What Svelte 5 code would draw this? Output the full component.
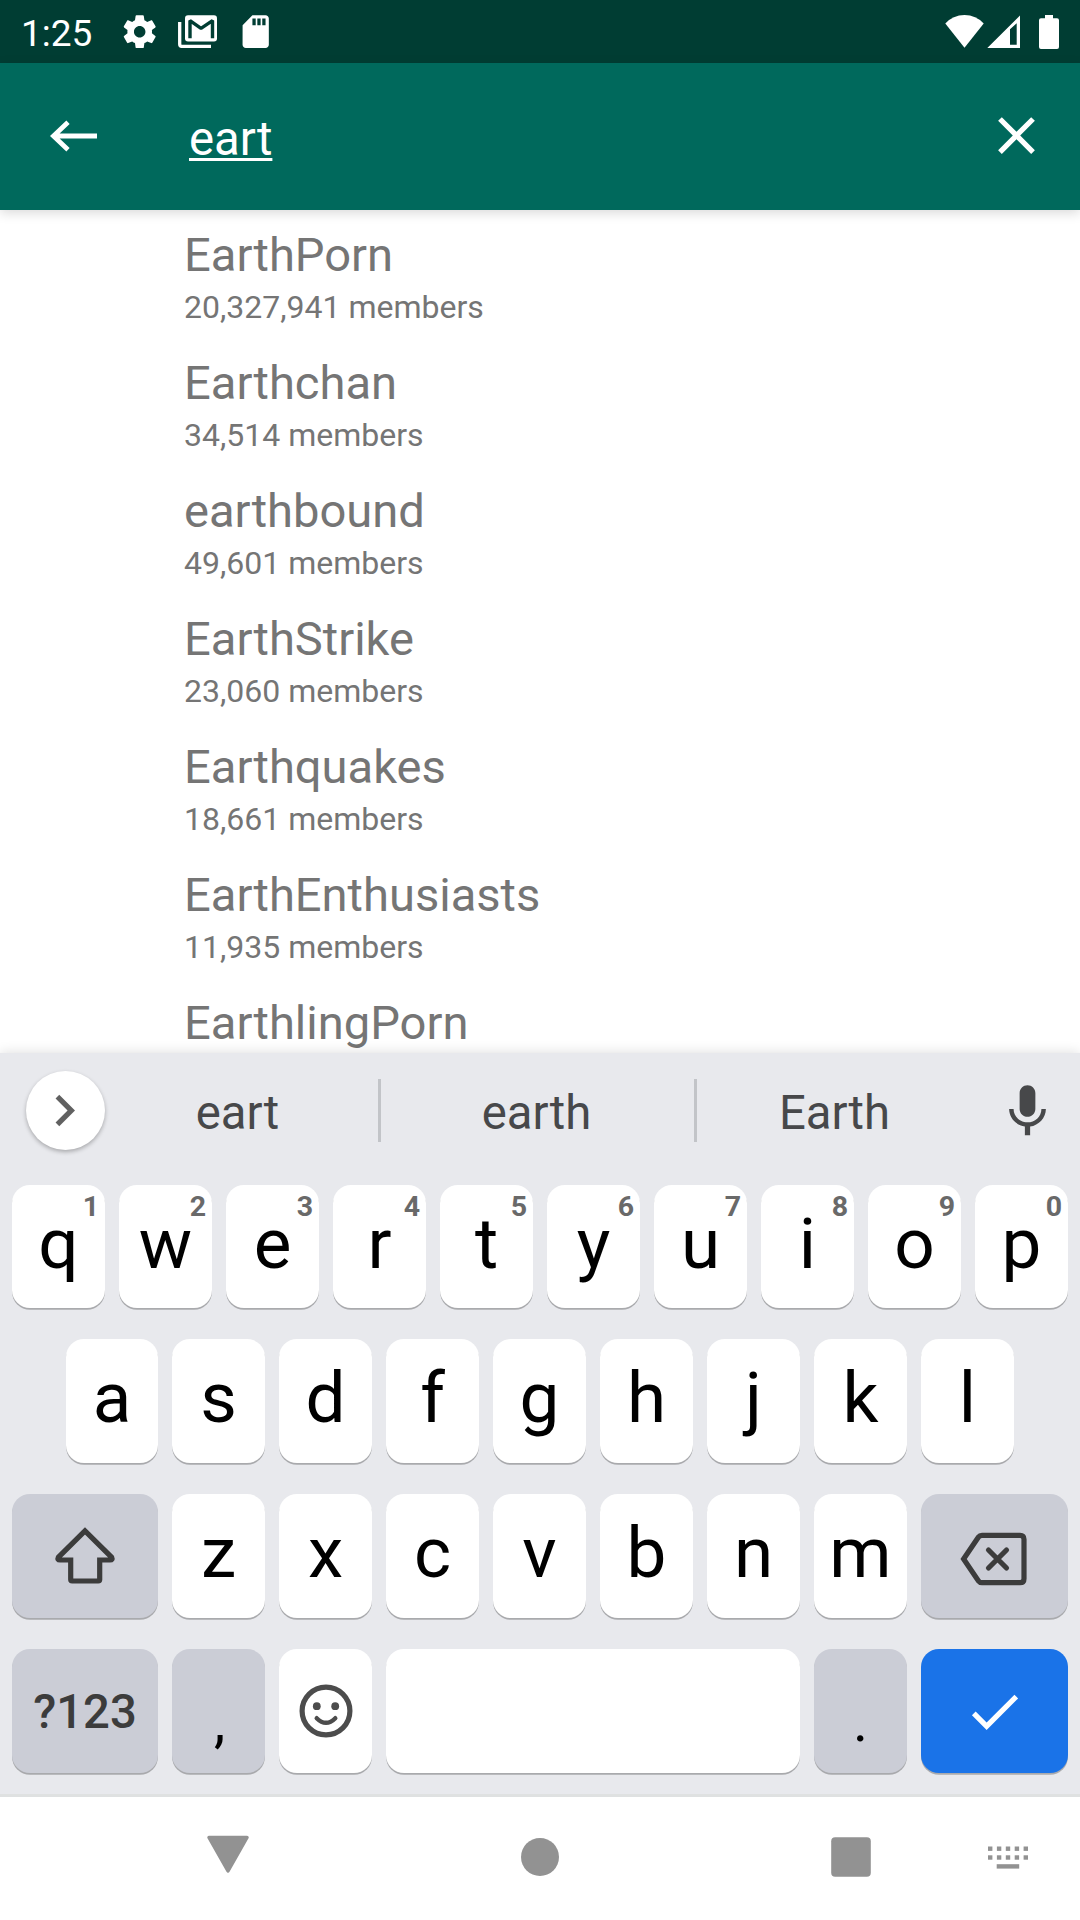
<script>
  const results = [
    ['EarthPorn', '20,327,941'],
    ['Earthchan', '34,514'],
    ['earthbound', '49,601'],
    ['EarthStrike', '23,060'],
    ['Earthquakes', '18,661'],
    ['EarthEnthusiasts', '11,935'],
    ['EarthlingPorn', ''],
  ];
  const top = [...'qwertyuiop'];
  const home = [...'asdfghjkl'];
  const bottom = [...'zxcvbnm'];
</script>

<div class="screen">
  <header class="status">
    <span class="time">1:25</span>
    <svg class="gear" viewBox="0 0 24 24" width="39.4" height="39.4"><path fill="#fff" d="M19.43 12.98c.04-.32.07-.64.07-.98s-.03-.66-.07-.98l2.11-1.65c.19-.15.24-.42.12-.64l-2-3.46c-.12-.22-.39-.3-.61-.22l-2.49 1c-.52-.4-1.08-.73-1.69-.98l-.38-2.65C14.46 2.18 14.25 2 14 2h-4c-.25 0-.46.18-.49.42l-.38 2.65c-.61.25-1.17.59-1.69.98l-2.49-1c-.23-.09-.49 0-.61.22l-2 3.46c-.13.22-.07.49.12.64l2.11 1.65c-.04.32-.07.65-.07.98s.03.66.07.98l-2.11 1.65c-.19.15-.24.42-.12.64l2 3.46c.12.22.39.3.61.22l2.49-1c.52.4 1.08.73 1.69.98l.38 2.65c.03.24.24.42.49.42h4c.25 0 .46-.18.49-.42l.38-2.65c.61-.25 1.17-.59 1.69-.98l2.49 1c.23.09.49 0 .61-.22l2-3.46c.12-.22.07-.49-.12-.64l-2.11-1.65zM12 15.5c-1.93 0-3.5-1.57-3.5-3.5s1.57-3.5 3.5-3.5 3.5 1.57 3.5 3.5-1.57 3.5-3.5 3.5z" /></svg>
    <svg class="mail" viewBox="0 0 40 34" width="40" height="34">
      <path d="M1.7 7v22.3q0 2 2 2H33" fill="none" stroke="#fff" stroke-width="3.3" />
      <rect x="7" y="0.2" width="32" height="26.3" rx="3" fill="#fff" />
      <path d="M12 23.3V5.6L23 13.3 34.5 5.6V23.3" fill="none" stroke="#003d33" stroke-width="3.4" stroke-linejoin="bevel" />
    </svg>
    <svg class="sd" viewBox="0 0 24 24" width="39.4" height="39.4"><path fill="#fff" d="M18 2h-8L4.02 8 4 20c0 1.1.9 2 2 2h12c1.1 0 2-.9 2-2V4c0-1.1-.9-2-2-2zm-6 6h-2V4h2v4zm3 0h-2V4h2v4zm3 0h-2V4h2v4z" /></svg>
    <svg class="signals" viewBox="0 0 116 36" width="116" height="36">
      <g fill="#fff">
        <path d="M0.3 9.5Q8 1 19.5 1T38.7 9.5L19.5 33.7Z" />
        <path fill-rule="evenodd" d="M42.3 34L75 1.5V34ZM65 15.3V30.7H71.7V9.3Z" />
        <path d="M100 1h8v3.3h4q2 0 2 2V33q0 2-2 2h-16q-2 0-2-2V6.300q0-2 2-2h4z" />
      </g>
    </svg>
  </header>

  <div class="appbar">
    <svg class="back" viewBox="0 0 52 36" width="52" height="36">
      <path d="M49 18H6M20 4.300L5.500 18L20 31.700" fill="none" stroke="#fff" stroke-width="4.800" />
    </svg>
    <span class="query">eart</span>
    <svg viewBox="0 0 24 24" width="63" height="63"><path fill="#fff" d="M19 6.410L17.590 5 12 10.590 6.410 5 5 6.410 10.590 12 5 17.590 6.410 19 12 13.410 17.590 19 19 17.590 13.410 12z" /></svg>
  </div>

  <main class="results">
    {#each results as [name, members]}
      <div class="result">
        <div class="name">{name}</div>
        {#if members}<div class="members">{members} members</div>{/if}
      </div>
    {/each}
  </main>

  <section class="keyboard">
    <div class="strip">
      <div class="expand">
        <svg viewBox="0 0 24 24" width="63" height="63"><path fill="#616161" d="M8.590 16.590L13.170 12 8.590 7.410 10 6l6 6-6 6z" /></svg>
      </div>
      <span class="word first">eart</span>
      <i></i>
      <span class="word mid">earth</span>
      <i></i>
      <span class="word last">Earth</span>
      <svg class="mic" viewBox="0 0 24 24" width="63" height="63"><path fill="#47484a" d="M12 14c1.660 0 2.990-1.340 2.990-3L15 5c0-1.660-1.340-3-3-3S9 3.340 9 5v6c0 1.660 1.340 3 3 3zm5.300-3c0 3-2.540 5.100-5.300 5.100S6.700 14 6.700 11H5c0 3.410 2.720 6.230 6 6.720V21h2v-3.280c3.280-.48 6-3.300 6-6.720h-1.700z" /></svg>
    </div>

    <div class="row top">
      {#each top as k, n}
        <div class="key">{k}<span class="hint">{(n + 1) % 10}</span></div>
      {/each}
    </div>
    <div class="row home">
      {#each home as k}<div class="key">{k}</div>{/each}
    </div>
    <div class="row">
      <div class="key dark wide shift">
        <svg viewBox="0 0 70 70" width="70" height="70"><path d="M35 10.800L8.300 37.300Q7 40 10 40H20.700V59.500Q20.700 61 22.200 61H48.200Q49.700 61 49.700 59.500V40H60Q63 40 61.700 37.300Z" fill="none" stroke="#3c3c3c" stroke-width="5.200" /></svg>
      </div>
      {#each bottom as k}<div class="key">{k}</div>{/each}
      <div class="key dark grow icon-low">
        <svg viewBox="0 0 80 70" width="80" height="70"><path d="M8.600 35L23.500 13Q24.700 11.300 27 11.300H65Q69 11.300 69 15.300V54.700Q69 58.700 65 58.700H27Q24.700 58.700 23.500 57Z" fill="none" stroke="#3c3c3c" stroke-width="5.200" /><path d="M33.500 26l18 18M51.500 26l-18 18" stroke="#3c3c3c" stroke-width="5.200" stroke-linecap="round" /></svg>
      </div>
    </div>
    <div class="row">
      <div class="key dark wide mode">?123</div>
      <div class="key dark punct comma">,</div>
      <div class="key icon">
        <svg viewBox="-30 -30 60 60" width="60" height="60"><circle r="23.900" fill="none" stroke="#4c4c4c" stroke-width="5.200" /><circle cx="-9.200" cy="-4.800" r="3.900" fill="#4c4c4c" /><circle cx="9.200" cy="-4.800" r="3.900" fill="#4c4c4c" /><path d="M-9.300 7.200Q0 16.500 9.300 7.200" fill="none" stroke="#4c4c4c" stroke-width="4.400" stroke-linecap="round" /></svg>
      </div>
      <div class="key grow"></div>
      <div class="key dark punct">.</div>
      <div class="key enter icon">
        <svg viewBox="0 0 24 24" width="63" height="63"><path fill="#fff" d="M9 16.170L4.830 12l-1.420 1.410L9 19 21 7l-1.410-1.410z" /></svg>
      </div>
    </div>
  </section>

  <nav>
    <svg viewBox="0 0 44 44" width="44" height="44"><path d="M3 2.500H41L22 36Z" fill="#929292" stroke="#929292" stroke-width="3.500" stroke-linejoin="round" /></svg>
    <svg class="round" viewBox="0 0 44 44" width="44" height="44"><circle cx="22" cy="22" r="19" fill="#929292" /></svg>
    <svg class="square" viewBox="0 0 44 44" width="44" height="44"><rect x="2.200" y="2.200" width="39.600" height="39.600" rx="4" fill="#929292" /></svg>
    <svg class="switcher" viewBox="0 0 44 44" width="44" height="44">
      <g fill="#929292">
        {#each [0, 1, 2, 3, 4] as c}
          <rect x={2 + c * 8.900} y="11.500" width="4.400" height="4.400" />
          <rect x={2 + c * 8.900} y="20.300" width="4.400" height="4.400" />
        {/each}
        <rect x="10.700" y="29.200" width="22.500" height="4.400" />
      </g>
    </svg>
  </nav>
</div>

<style>
  :global(body) { background: #fff; }
  .screen {
    width: 1080px;
    height: 1920px;
    display: flex;
    flex-direction: column;
    overflow: hidden;
    font-family: Roboto, sans-serif;
  }
  svg { display: block; flex: none; }

  .status {
    height: 63px;
    flex: none;
    display: flex;
    align-items: center;
    box-sizing: border-box;
    padding: 0 19px 0 21px;
    background: #003d33;
    color: #fff;
  }
  .time { width: 98.800px; font-size: 37px; line-height: 40px; padding-top: 4px; }
  .mail { margin-left: 18.500px; }
  .sd { margin-left: 18.500px; }
  .signals { margin-left: auto; }

  .appbar {
    position: relative;
    z-index: 1;
    height: 147px;
    flex: none;
    box-sizing: border-box;
    display: flex;
    align-items: center;
    padding: 0 32px 2px 48px;
    background: #00695c;
    color: #fff;
    box-shadow: 0 3px 11px rgba(0, 0, 0, .15);
  }
  .back { margin-top: 1px; }
  .query {
    margin: 7px auto 0 89px;
    font-size: 47.25px;
    line-height: 56px;
    text-decoration: underline;
    text-decoration-thickness: 2.600px;
    text-underline-offset: 3px;
    text-decoration-skip-ink: none;
  }

  .results { height: 843px; flex: none; overflow: hidden; color: #757575; }
  .result { height: 128px; box-sizing: border-box; padding: 17px 0 0 184px; }
  .result:last-child { height: 75px; }
  .name { font-size: 47.100px; line-height: 56px; }
  .members { margin-top: 5px; font-size: 32px; line-height: 38px; }

  .keyboard {
    position: relative;
    height: 744px;
    flex: none;
    box-sizing: border-box;
    border-bottom: 3px solid #dfe1e1;
    background: #e8e9ed;
    box-shadow: 0 0 12px rgba(0, 0, 0, .14);
  }
  .strip { height: 115px; display: flex; align-items: center; padding-left: 26px; margin-bottom: 17px; color: #47484a; }
  .expand {
    width: 79px;
    height: 79px;
    box-sizing: border-box;
    display: flex;
    align-items: center;
    justify-content: center;
    padding: 0 2px 1px 0;
    border-radius: 50%;
    background: #fff;
    box-shadow: 0 2px 4px rgba(0, 0, 0, .28);
  }
  .word { box-sizing: border-box; font-size: 47.25px; line-height: 56px; padding-top: 5px; text-align: center; }
  .first { width: 273px; padding-right: 8px; }
  .mid { width: 313px; padding-right: 2px; }
  .last { width: 276px; padding-right: 1px; }
  .mic { margin: 2px 0 0 23px; }
  i { width: 3px; height: 63px; background: #c2c4c8; }

  .row { height: 124px; display: flex; gap: 14px; padding: 0 12px; margin-bottom: 31px; }
  .top { height: 123px; }
  .home { padding-left: 66px; }
  .home .key:first-child { width: 92px; }
  .key {
    position: relative;
    width: 93px;
    flex: none;
    box-sizing: border-box;
    display: flex;
    align-items: center;
    justify-content: center;
    padding-bottom: 7px;
    border-radius: 18px;
    background: #fff;
    box-shadow: 0 1.800px 0 #a9aaad;
    color: #000;
    font-size: 71px;
    line-height: 84px;
  }
  .top .key { padding-bottom: 5px; }
  .hint {
    position: absolute;
    top: 6px;
    right: 6px;
    font-size: 28.500px;
    line-height: 32px;
    font-weight: 700;
    color: #696969;
  }
  .dark { background: #cbcdd6; }
  .wide { width: 146px; }
  .grow { width: auto; flex: 1; }
  .wide, .icon-low, .icon { padding-bottom: 0; }
  .shift { padding-bottom: 2px; }
  .icon-low { padding: 5px 0 0 0; }
  .mode { padding-top: 2px; font-size: 47.25px; font-weight: 500; color: #3c3c3c; }
  .punct { padding: 21px 0 0; font-size: 57px; }
  .comma { padding-left: 2px; }
  .enter { width: 147px; background: #1a73e8; }

  nav {
    position: relative;
    flex: 1;
    display: flex;
    align-items: flex-start;
    padding: 38px 0 0 206px;
    background: #fff;
  }
  .round { margin-left: 268px; }
  .square { margin-left: 267px; }
  .switcher { margin-left: 112.500px; }
</style>
